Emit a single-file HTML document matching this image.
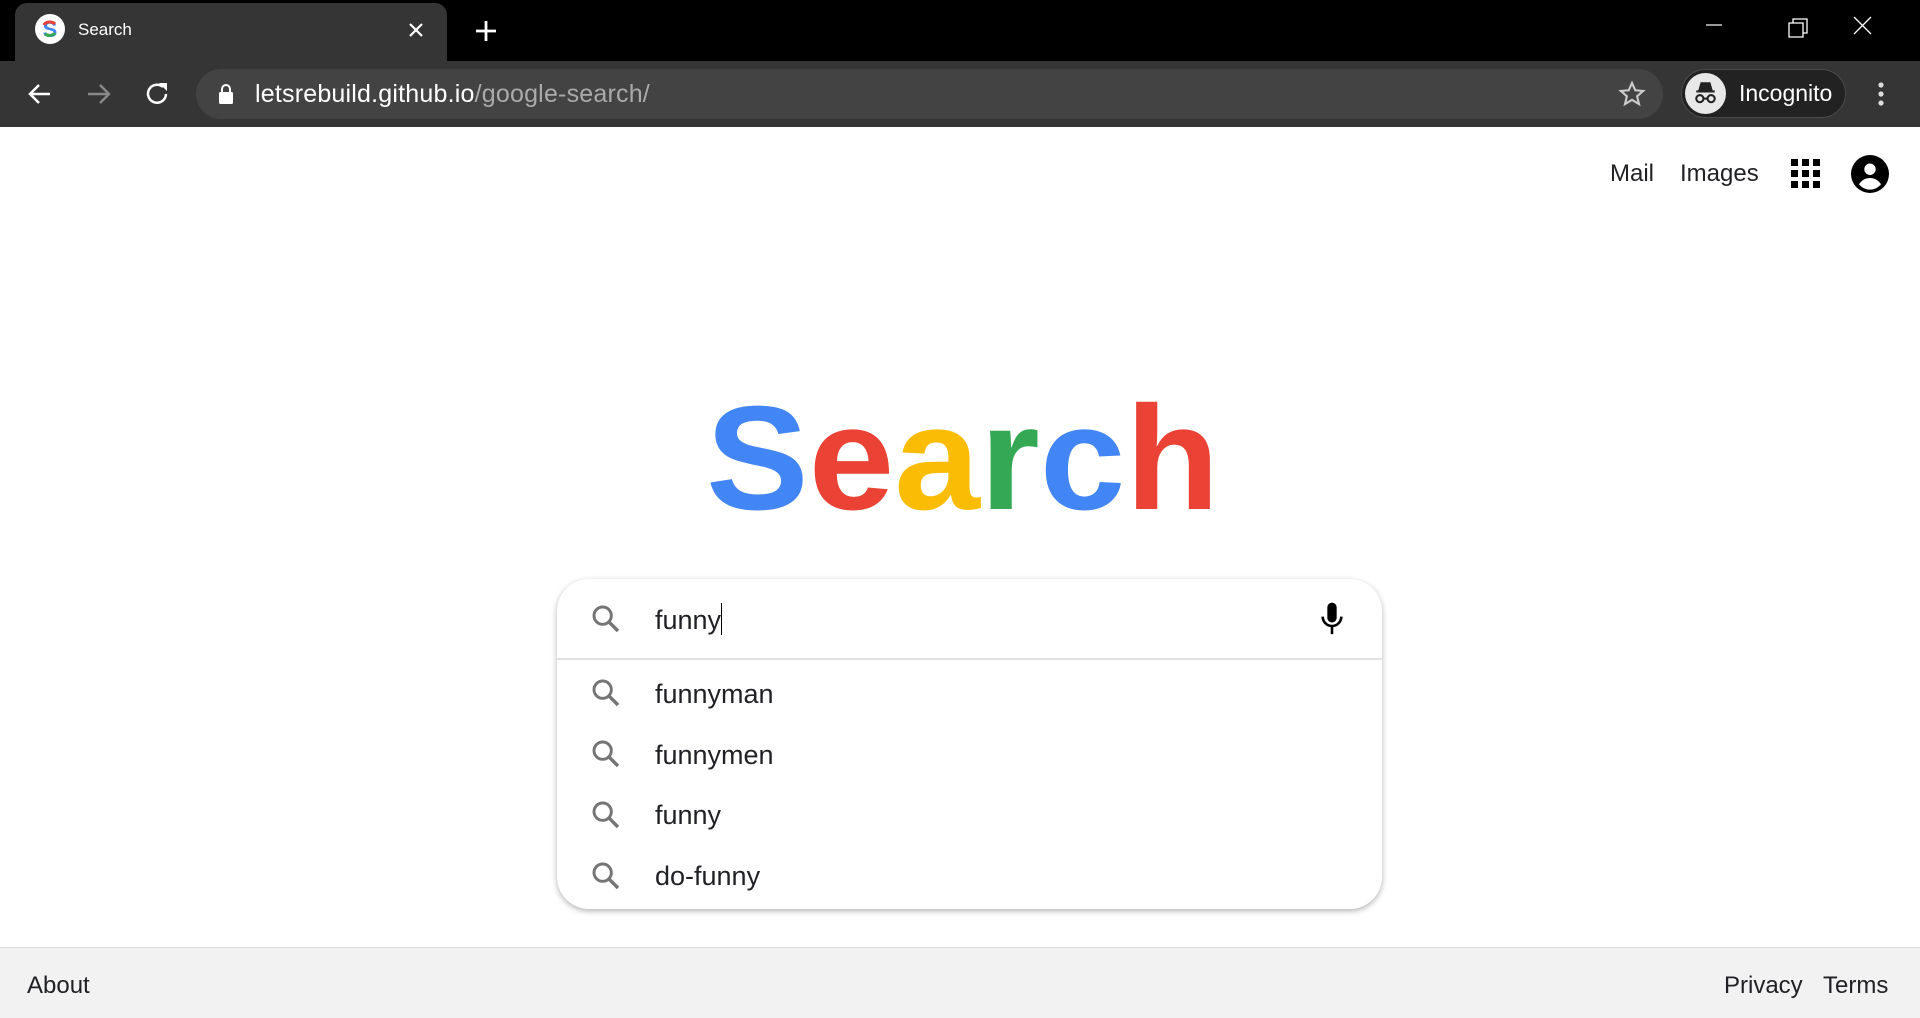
<!DOCTYPE html>
<html><head><meta charset="utf-8"><style>
*{margin:0;padding:0;box-sizing:border-box}
body{width:1920px;height:1018px;overflow:hidden;background:#fff;font-family:"Liberation Sans",sans-serif;position:relative}
.abs{position:absolute}
#tabs{left:0;top:0;width:1920px;height:61px;background:#000}
#tab{left:15px;top:3px;width:432px;height:60px;background:#353535;border-radius:12px 12px 0 0}
#toolbar{left:0;top:61px;width:1920px;height:66px;background:#353535}
#omni{left:196px;top:69px;width:1467px;height:50px;background:#434343;border-radius:25px}
#incog{left:1681px;top:69px;width:165px;height:49px;background:#222;border:1px solid #4a4a4a;border-radius:25px}
.tw{color:#fff;font-size:24px}
#logo{left:706px;top:385px;font-size:148px;font-weight:bold;line-height:148px;transform:scaleX(1.04);transform-origin:left top;letter-spacing:0}
#box{left:557px;top:579px;width:825px;height:330px;border-radius:32px;background:#fff;box-shadow:0 2px 6px rgba(32,33,36,.35)}
#div{left:557px;top:658px;width:825px;height:2px;background:#dfe1e5}
.sug{left:655px;font-size:27px;color:#202124;line-height:30px}
.mag{left:590px}
#footer{left:0;top:947px;width:1920px;height:71px;background:#f2f2f2;border-top:1px solid #dadce0}
.ft{font-size:24px;color:#202124;top:972px}
</style></head><body>
<div id="tabs" class="abs"></div>
<div id="tab" class="abs"></div>
<svg class="abs" style="left:35px;top:14px" width="30" height="30" viewBox="0 0 30 30"><circle cx="15" cy="15" r="15" fill="#fff"/><text x="15" y="23" text-anchor="middle" font-family="Liberation Sans" font-weight="bold" font-size="22" fill="#4285f4">S</text><path d="M9 11a6 4 0 0 1 11-1" stroke="#ea4335" stroke-width="3" fill="none"/><path d="M10 20a6 4 0 0 0 10-1" stroke="#34a853" stroke-width="3" fill="none"/></svg>
<div class="abs" style="left:78px;top:20px;color:#fff;font-size:17px">Search</div>
<svg class="abs" style="left:408px;top:22px" width="16" height="16"><path d="M2 2L14 14M14 2L2 14" stroke="#fff" stroke-width="2.2"/></svg>
<svg class="abs" style="left:474px;top:19px" width="24" height="24"><path d="M12 2V22M2 12H22" stroke="#fff" stroke-width="2.8"/></svg>
<svg class="abs" style="left:1704px;top:16px" width="170" height="22"><path d="M2 9H18" stroke="#fff" stroke-width="1.2"/><path d="M85 7h14v14H85zM89 7V3h14v14h-4" stroke="#fff" stroke-width="1.3" fill="none"/><path d="M150 1L167 18M167 1L150 18" stroke="#fff" stroke-width="1.3"/></svg>
<div id="toolbar" class="abs"></div>
<svg class="abs" style="left:26px;top:80px" width="150" height="28"><path d="M24 14H5M13 5L4 14L13 23" stroke="#fff" stroke-width="2.5" fill="none"/><path d="M62 14H82M74 5L83 14L74 23" stroke="#888" stroke-width="2.5" fill="none"/><path d="M137 7a9 9 0 1 0 3 7" stroke="#fff" stroke-width="2.5" fill="none"/><path d="M133 3h8v8z" fill="#fff"/></svg>
<div id="omni" class="abs"></div>
<svg class="abs" style="left:218px;top:83px" width="16" height="22"><path d="M4 9V6a4 4 0 0 1 8 0v3" stroke="#fff" stroke-width="2" fill="none"/><rect x="1" y="9" width="14" height="12" rx="1.5" fill="#fff"/></svg>
<div class="abs tw" style="left:255px;top:80px;font-size:25px;letter-spacing:.2px">letsrebuild.github.io<span style="color:#aaa">/google-search/</span></div>
<svg class="abs" style="left:1618px;top:80px" width="28" height="28" viewBox="0 0 24 24"><path d="M12 2.5l2.8 6.3 6.8.6-5.2 4.5 1.6 6.7L12 17l-6 3.6 1.6-6.7-5.2-4.5 6.8-.6z" stroke="#ccc" stroke-width="1.8" fill="none"/></svg>
<div id="incog" class="abs"></div>
<svg class="abs" style="left:1685px;top:73px" width="41" height="41" viewBox="0 0 40 40"><circle cx="20" cy="20" r="20" fill="#e8e8e8"/><path d="M11 18h18M14 17l2-7h8l2 7z" stroke="#222" stroke-width="2" fill="#222"/><circle cx="14.5" cy="25" r="3.5" stroke="#222" stroke-width="2" fill="none"/><circle cx="25.5" cy="25" r="3.5" stroke="#222" stroke-width="2" fill="none"/><path d="M18 25h4" stroke="#222" stroke-width="2"/></svg>
<div class="abs tw" style="left:1739px;top:80px;font-size:23px">Incognito</div>
<svg class="abs" style="left:1874px;top:80px" width="14" height="30"><circle cx="7" cy="5" r="2.6" fill="#ddd"/><circle cx="7" cy="14" r="2.6" fill="#ddd"/><circle cx="7" cy="23" r="2.6" fill="#ddd"/></svg>

<div class="abs" style="left:1610px;top:160px;font-size:24px;color:#202124">Mail</div>
<div class="abs" style="left:1680px;top:160px;font-size:24px;color:#202124">Images</div>
<svg class="abs" style="left:1791px;top:159px" width="30" height="30"><g fill="#000"><rect x="0" y="0" width="7" height="7"/><rect x="11" y="0" width="7" height="7"/><rect x="22" y="0" width="7" height="7"/><rect x="0" y="11" width="7" height="7"/><rect x="11" y="11" width="7" height="7"/><rect x="22" y="11" width="7" height="7"/><rect x="0" y="22" width="7" height="7"/><rect x="11" y="22" width="7" height="7"/><rect x="22" y="22" width="7" height="7"/></g></svg>
<svg class="abs" style="left:1851px;top:155px" width="38" height="38" viewBox="0 0 24 24"><circle cx="12" cy="12" r="12" fill="#000"/><circle cx="12" cy="9" r="3.6" fill="#fff"/><path d="M5 18.5c2-3 4.5-4 7-4s5 1 7 4a9 9 0 0 1-14 0z" fill="#fff"/></svg>

<div id="logo" class="abs"><span style="color:#4285f4">S</span><span style="color:#ea4335">e</span><span style="color:#fbbc05">a</span><span style="color:#34a853">r</span><span style="color:#4285f4">c</span><span style="color:#ea4335">h</span></div>

<div id="box" class="abs"></div>
<div id="div" class="abs"></div>
<svg class="abs mag" style="top:603px" width="32" height="32" viewBox="0 0 24 24"><circle cx="9.5" cy="9.5" r="6.5" stroke="#757575" stroke-width="2.2" fill="none"/><path d="M14.5 14.5L21 21" stroke="#757575" stroke-width="2.6"/></svg>
<div class="abs sug" style="top:603px">funny<span style="display:inline-block;width:1px;height:32px;background:#000;vertical-align:-6px"></span></div>
<svg class="abs" style="left:1318px;top:601px" width="28" height="36" viewBox="0 0 24 30"><rect x="8" y="1" width="8" height="17" rx="4" fill="#000"/><path d="M4 13a8 8 0 0 0 16 0M12 21v7" stroke="#000" stroke-width="2.2" fill="none"/></svg>

<svg class="abs mag" style="top:677px" width="32" height="32" viewBox="0 0 24 24"><circle cx="9.5" cy="9.5" r="6.5" stroke="#757575" stroke-width="2.2" fill="none"/><path d="M14.5 14.5L21 21" stroke="#757575" stroke-width="2.6"/></svg>
<div class="abs sug" style="top:679px">funnyman</div>
<svg class="abs mag" style="top:738px" width="32" height="32" viewBox="0 0 24 24"><circle cx="9.5" cy="9.5" r="6.5" stroke="#757575" stroke-width="2.2" fill="none"/><path d="M14.5 14.5L21 21" stroke="#757575" stroke-width="2.6"/></svg>
<div class="abs sug" style="top:740px">funnymen</div>
<svg class="abs mag" style="top:799px" width="32" height="32" viewBox="0 0 24 24"><circle cx="9.5" cy="9.5" r="6.5" stroke="#757575" stroke-width="2.2" fill="none"/><path d="M14.5 14.5L21 21" stroke="#757575" stroke-width="2.6"/></svg>
<div class="abs sug" style="top:800px">funny</div>
<svg class="abs mag" style="top:860px" width="32" height="32" viewBox="0 0 24 24"><circle cx="9.5" cy="9.5" r="6.5" stroke="#757575" stroke-width="2.2" fill="none"/><path d="M14.5 14.5L21 21" stroke="#757575" stroke-width="2.6"/></svg>
<div class="abs sug" style="top:861px">do-funny</div>

<div id="footer" class="abs"></div>
<div class="abs ft" style="left:27px">About</div>
<div class="abs ft" style="left:1724px">Privacy</div>
<div class="abs ft" style="left:1823px">Terms</div>
</body></html>
